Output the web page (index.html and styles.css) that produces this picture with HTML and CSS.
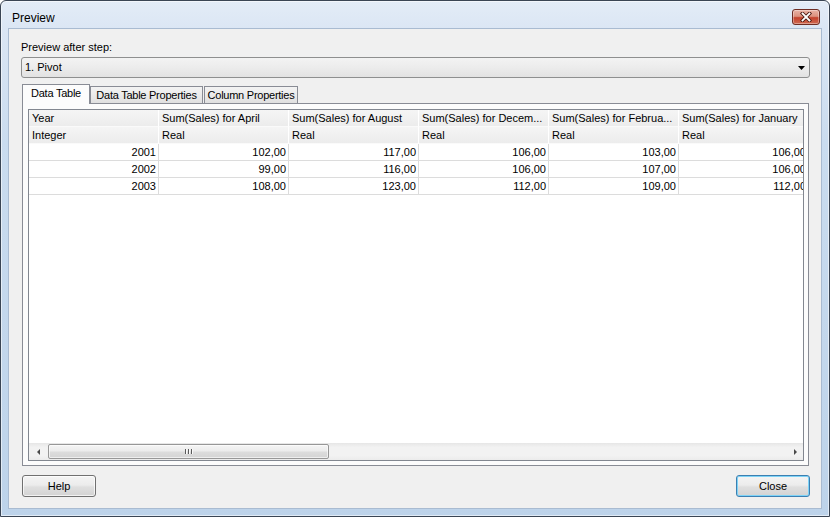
FILE: index.html
```html
<!DOCTYPE html>
<html>
<head>
<meta charset="utf-8">
<title>Preview</title>
<link rel="stylesheet" href="styles.css">
</head>
<body>
<div class="window">
  <div class="titlebar">
    <span class="title">Preview</span>
    <div class="xbtn">
      <svg width="12" height="10" viewBox="0 0 12 10">
        <path d="M2.5 1.5 L9.5 8.5 M9.5 1.5 L2.5 8.5" stroke="#4a1a12" stroke-width="3.6" stroke-linecap="square" fill="none"/>
        <path d="M2.5 1.5 L9.5 8.5 M9.5 1.5 L2.5 8.5" stroke="#ffffff" stroke-width="1.8" stroke-linecap="square" fill="none"/>
      </svg>
    </div>
  </div>
  <div class="client">
    <div class="label">Preview after step:</div>
    <div class="combo">
      <span class="combo-text">1. Pivot</span>
      <svg class="combo-arrow" width="7" height="4" viewBox="0 0 7 4"><polygon points="0,0 7,0 3.5,4" fill="#000"/></svg>
    </div>
    <div class="tabs">
      <div class="tab active t1">Data Table</div>
      <div class="tab t2">Data Table Properties</div>
      <div class="tab t3">Column Properties</div>
    </div>
    <div class="panel">
      <div class="grid">
        <div class="table-area">
          <div class="dgrid">
            <div class="c h">Year</div>
            <div class="c h">Sum(Sales) for April</div>
            <div class="c h">Sum(Sales) for August</div>
            <div class="c h">Sum(Sales) for Decem...</div>
            <div class="c h">Sum(Sales) for Februa...</div>
            <div class="c h">Sum(Sales) for January</div>

            <div class="c h">Integer</div>
            <div class="c h">Real</div>
            <div class="c h">Real</div>
            <div class="c h">Real</div>
            <div class="c h">Real</div>
            <div class="c h">Real</div>

            <div class="c d">2001</div>
            <div class="c d">102,00</div>
            <div class="c d">117,00</div>
            <div class="c d">106,00</div>
            <div class="c d">103,00</div>
            <div class="c d">106,00</div>

            <div class="c d">2002</div>
            <div class="c d">99,00</div>
            <div class="c d">116,00</div>
            <div class="c d">106,00</div>
            <div class="c d">107,00</div>
            <div class="c d">106,00</div>

            <div class="c d">2003</div>
            <div class="c d">108,00</div>
            <div class="c d">123,00</div>
            <div class="c d">112,00</div>
            <div class="c d">109,00</div>
            <div class="c d">112,00</div>
          </div>
        </div>
        <div class="hscroll">
          <div class="sbtn"><span class="tri-left"></span></div>
          <div class="thumb"><span class="grip"></span><span class="grip"></span><span class="grip"></span></div>
          <div class="track"></div>
          <div class="sbtn"><span class="tri-right"></span></div>
        </div>
      </div>
    </div>
    <div class="buttons">
      <div class="btn">Help</div>
      <div class="btn default">Close</div>
    </div>
  </div>
</div>
</body>
</html>
```

FILE: styles.css
```css
* { box-sizing: border-box; }
html, body { margin: 0; padding: 0; }
body {
  width: 830px;
  height: 517px;
  overflow: hidden;
  font-family: "Liberation Sans", Arial, sans-serif;
  font-size: 11px;
  color: #000;
  background: #fff;
}

.window {
  width: 830px;
  height: 517px;
  border: 1px solid #3a4554;
  border-radius: 6px 6px 0 0;
  background: linear-gradient(to bottom, #e3ecf7 0px, #dbe6f4 28px, #cadcef 140px, #bdd3ea 100%);
  box-shadow: inset 0 0 0 1px rgba(255, 255, 255, 0.55);
  display: flex;
  flex-direction: column;
  padding: 0 7px 7px 7px;
}

.titlebar {
  height: 27px;
  flex: none;
  display: flex;
  align-items: flex-start;
  justify-content: space-between;
}
.title {
  font-size: 12px;
  line-height: 16px;
  padding: 9px 0 0 4px;
  color: #000;
}
.xbtn {
  width: 28px;
  height: 16px;
  margin-top: 8px;
  margin-right: 2px;
  border: 1px solid #6e2d24;
  border-radius: 3px;
  background: linear-gradient(to bottom, #e9b2a5 0%, #dc927f 45%, #c4412c 55%, #cf6a52 100%);
  box-shadow: inset 0 0 0 1px rgba(255, 255, 255, 0.35);
  display: flex;
  align-items: center;
  justify-content: center;
}

.client {
  flex: 1;
  background: #f0f0f0;
  border: 1px solid #a9bbd1;
  padding: 12px 11px 0 12px;
  display: flex;
  flex-direction: column;
}

.label {
  line-height: 13px;
  height: 13px;
}

.combo {
  margin-top: 3px;
  height: 21px;
  flex: none;
  border: 1px solid #8e8f8f;
  border-radius: 3px;
  background: linear-gradient(to bottom, #f3f3f3 0%, #ececec 50%, #e2e2e2 100%);
  display: flex;
  align-items: center;
  justify-content: space-between;
  padding: 0 4px 0 3px;
}
.combo-text { line-height: 19px; }

.tabs {
  margin: 6px 0 0 1px;
  height: 19px;
  flex: none;
  display: flex;
  align-items: flex-end;
  position: relative;
  z-index: 1;
}
.tab {
  height: 17px;
  border: 1px solid #898c95;
  border-bottom: none;
  background: linear-gradient(to bottom, #f3f3f3 0%, #ebebeb 50%, #e0e0e0 100%);
  line-height: 16px;
  text-align: center;
  white-space: nowrap;
  letter-spacing: -0.25px;
}
.tab.active {
  height: 20px;
  margin-bottom: -1px;
  background: #fcfcfc;
  line-height: 17px;
}
.t1 { width: 68px; }
.t2 { width: 113px; }
.t3 { width: 94px; margin-left: 1px; }

.panel {
  margin: 0 1px;
  height: 363px;
  flex: none;
  border: 1px solid #898c95;
  background: #fcfcfc;
  padding: 5px 4px 4px 5px;
}
.grid {
  height: 100%;
  border: 1px solid #828790;
  background: #fff;
  display: flex;
  flex-direction: column;
  overflow: hidden;
}
.table-area {
  flex: 1;
  overflow: hidden;
}
.dgrid {
  display: grid;
  grid-template-columns: repeat(6, 130px);
  grid-auto-rows: 17px;
  width: 780px;
}
.c {
  height: 17px;
  line-height: 16px;
  white-space: nowrap;
  overflow: hidden;
}
.h {
  background: linear-gradient(to bottom, #f5f5f5 0%, #ececec 100%);
  border-right: 1px solid #ffffff;
  border-bottom: 1px solid #fafafa;
  padding-left: 3px;
}
.d {
  background: #fff;
  border-right: 1px solid #dcdcdc;
  border-bottom: 1px solid #dcdcdc;
  text-align: right;
  padding-right: 2px;
}

.hscroll {
  height: 17px;
  flex: none;
  display: flex;
  align-items: center;
  background: linear-gradient(to bottom, #e6e6e6 0%, #f2f2f2 25%, #f2f2f2 75%, #ebebeb 100%);
}
.sbtn {
  width: 17px;
  height: 17px;
  flex: none;
  display: flex;
  align-items: center;
  justify-content: center;
}
.tri-left {
  width: 0; height: 0;
  border-top: 3px solid transparent;
  border-bottom: 3px solid transparent;
  border-right: 3px solid #4a4a4a;
  margin-left: 1px;
}
.tri-right {
  width: 0; height: 0;
  border-top: 3px solid transparent;
  border-bottom: 3px solid transparent;
  border-left: 3px solid #4a4a4a;
  margin-left: 2px;
}
.thumb {
  width: 281px;
  height: 15px;
  margin-left: 2px;
  border: 1px solid #979797;
  border-radius: 2px;
  background: linear-gradient(to bottom, #f5f5f5 0%, #ececec 45%, #dcdcdc 55%, #d4d4d4 100%);
  box-shadow: inset 0 0 0 1px rgba(255, 255, 255, 0.6);
  display: flex;
  align-items: center;
  justify-content: center;
  gap: 1px;
}
.grip {
  width: 1px;
  height: 5px;
  background: #5a5a5a;
  box-shadow: 1px 0 0 #fafafa;
  margin-right: 1px;
}
.track { flex: 1; }

.buttons {
  margin: 9px 0 0 1px;
  display: flex;
  justify-content: space-between;
}
.btn {
  width: 74px;
  height: 22px;
  border: 1px solid #707070;
  border-radius: 3px;
  background: linear-gradient(to bottom, #f4f4f4 0%, #ececec 45%, #dfdfdf 55%, #d3d3d3 100%);
  box-shadow: inset 0 0 0 1px rgba(255, 255, 255, 0.7);
  text-align: center;
  line-height: 20px;
}
.btn.default {
  border-color: #3c7fb1;
  box-shadow: inset 0 0 0 1px #7ed3f7;
}
```
